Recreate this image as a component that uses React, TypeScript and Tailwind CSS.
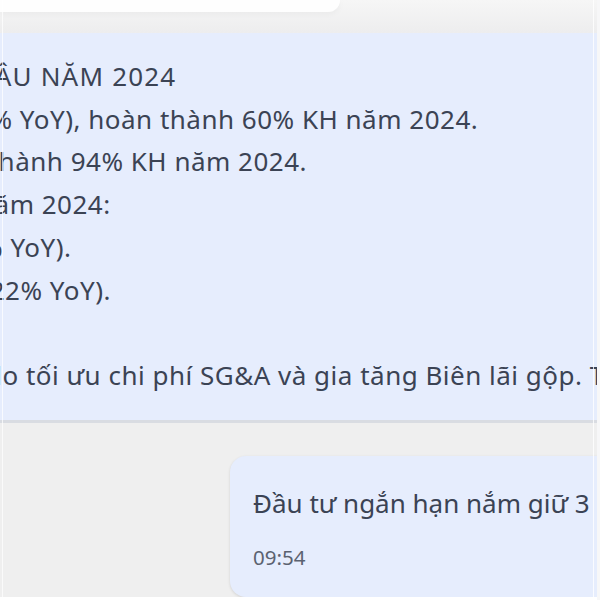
const FONT = "font-['Noto_Sans',_'Liberation_Sans',_sans-serif]";

const LINES: { text: string; shift: string }[] = [
  { text: "ĐẦU NĂM 2024", shift: "-ml-[25px] tracking-[1.2px]" },
  { text: "(+18% YoY), hoàn thành 60% KH năm 2024.", shift: "-ml-[64px]" },
  { text: "hoàn thành 94% KH năm 2024.", shift: "-ml-[83px]" },
  { text: "năm 2024:", shift: "-ml-[22px]" },
  { text: "(+5% YoY).", shift: "-ml-[58px]" },
  { text: "(+22% YoY).", shift: "-ml-[34px]" },
  { text: "\u00a0", shift: "" },
  { text: "do tối ưu chi phí SG&A và gia tăng Biên lãi gộp. Tuy nhiên", shift: "-ml-[14px]" },
];

export default function App() {
  return (
    <div className={`relative flex h-[600px] w-[600px] flex-col overflow-hidden bg-[#efefef] ${FONT}`}>
      {/* top strip: tail of the previous card */}
      <div className="h-[33px] shrink-0 bg-gradient-to-b from-[#f6f6f6] to-[#ededee]">
        <div className="h-[12px] w-[340px] rounded-br-[18px] bg-white/90 shadow-[0_2px_6px_rgba(0,0,0,0.04)]" />
      </div>

      {/* bot reply bubble */}
      <div className="h-[390px] shrink-0 overflow-hidden border-b-[3px] border-[#d9dce2] bg-[#e6edfd] pt-[22px] text-[26px] leading-[42.7px] tracking-[0.5px] text-[#3b4354]">
        {LINES.map((line, i) => (
          <div key={i} className={`whitespace-nowrap ${line.shift}`}>
            {line.text}
          </div>
        ))}
      </div>

      {/* user bubble */}
      <div className="mt-[33px] ml-[230px] flex h-[141px] w-[400px] shrink-0 flex-col rounded-[16px] bg-[#e6edfd] px-[23px] pt-[30px] shadow-[0_1px_3px_rgba(0,0,0,0.12)]">
        <div className="w-[341px] overflow-hidden whitespace-nowrap text-[26px] leading-[34px] text-[#3b4354]">Đầu tư ngắn hạn nắm giữ 3 tháng</div>
        <div className="mt-[25px] text-[20.5px] leading-[24px] text-[#5b6270]">09:54</div>
      </div>

      <div className="absolute bottom-0 left-0 h-[3px] w-full bg-white" />
      {/* page edges */}
      <div className="absolute left-[2px] top-0 h-full w-px bg-white/70" />
      <div className="absolute right-[6px] top-0 h-full w-px bg-white/80" />
      <div className="absolute right-0 top-0 h-full w-[3px] bg-[#f7f7f8]" />
    </div>
  );
}
